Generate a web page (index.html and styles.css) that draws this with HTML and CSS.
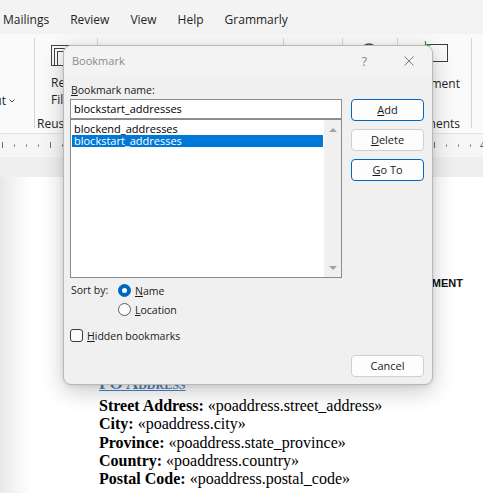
FILE: index.html
```html
<!DOCTYPE html>
<html>
<head>
<meta charset="utf-8">
<link rel="stylesheet" href="styles.css">
</head>
<body>
<div class="app">
  <div class="tabs">
    <span>Mailings</span><span>Review</span><span>View</span><span>Help</span><span>Grammarly</span>
  </div>
  <div class="ribbon">
    <div class="group g1"><span class="drop">Layout<svg class="chev" width="6" height="4" viewBox="0 0 6 4"><path d="M0.5 0.5L3 3L5.5 0.5" stroke="#444" stroke-width="1" fill="none"/></svg></span></div>
    <div class="group g2">
      <svg class="ico-reuse" width="24" height="24" viewBox="0 0 24 24"><rect x="0.5" y="1.5" width="20" height="20" fill="none" stroke="#444"/><rect x="3.5" y="4.5" width="14" height="17" fill="#fff" stroke="#444"/><rect x="6.5" y="7.5" width="14" height="14" fill="none" stroke="#444"/></svg>
      <div class="btnlabel">Reuse<br>Files</div>
      <div class="glabel">Reuse Files</div>
    </div>
    <div class="group g3"></div>
    <div class="group g4"></div>
    <div class="group g5">
      <svg class="ico-ring" width="20" height="20" viewBox="0 0 20 20"><circle cx="10" cy="10" r="8" fill="none" stroke="#444" stroke-width="1.4"/></svg>
    </div>
    <div class="group g6">
      <svg class="ico-comment" width="26" height="24" viewBox="0 0 26 24"><rect x="3.5" y="4.5" width="20" height="17" fill="none" stroke="#3b3b3b"/><path d="M1.5 1v8M1.5 5h5" stroke="#2e9a3b" stroke-width="1.3" fill="none"/></svg>
      <div class="btnlabel right">Comment</div>
      <div class="glabel right">Comments</div>
    </div>
    <div class="group g7"></div>
  </div>
  <div class="ruler">
    <svg width="483" height="23" viewBox="0 0 483 23">
      <g stroke="#6d6d6d" stroke-width="1">
        <line x1="2.5" y1="8" x2="2.5" y2="14"/>
        <line x1="14.5" y1="10.5" x2="14.5" y2="12.5"/>
        <line x1="26.5" y1="10.5" x2="26.5" y2="12.5"/>
        <line x1="38.5" y1="10.5" x2="38.5" y2="12.5"/>
        <line x1="50.5" y1="8" x2="50.5" y2="14"/>
        <line x1="62.5" y1="10.5" x2="62.5" y2="12.5"/>
        <line x1="434.5" y1="8" x2="434.5" y2="14"/>
        <line x1="446.5" y1="10.5" x2="446.5" y2="12.5"/>
        <line x1="458.5" y1="10.5" x2="458.5" y2="12.5"/>
        <line x1="470.5" y1="10.5" x2="470.5" y2="12.5"/>
      </g>
      <text x="480" y="15" font-family="Open Sans" font-size="10" fill="#555">4</text>
    </svg>
  </div>
  <div class="band"></div>
  <div class="doc">
    <p class="agreement">PURCHASE AGREEMENT</p>
    <h2 class="po">PO Address</h2>
    <p class="field"><b>Street Address:</b> «poaddress.street_address»</p>
    <p class="field"><b>City:</b> «poaddress.city»</p>
    <p class="field"><b>Province:</b> «poaddress.state_province»</p>
    <p class="field"><b>Country:</b> «poaddress.country»</p>
    <p class="field"><b>Postal Code:</b> «poaddress.postal_code»</p>
  </div>
</div>

<div class="dialog">
  <div class="titlebar">
    <span class="title">Bookmark</span>
    <span class="help">?</span>
    <svg class="close" width="10" height="10" viewBox="0 0 10 10"><path d="M0.5 0.5L9.5 9.5M9.5 0.5L0.5 9.5" stroke="#7a7a7a" stroke-width="1" fill="none"/></svg>
  </div>
  <div class="dbody">
    <div class="namelabel"><u>B</u>ookmark name:</div>
    <div class="leftcol">
      <div class="input">blockstart_addresses</div>
      <div class="list">
        <div class="items">
          <div class="item">blockend_addresses</div>
          <div class="item sel">blockstart_addresses</div>
        </div>
        <div class="scroll"><span class="tri up"></span><span class="tri down"></span></div>
      </div>
      <div class="sort">
        <span class="sortlabel">Sort by:</span>
        <div class="radios">
          <div class="opt"><span class="radio on"></span><span><u>N</u>ame</span></div>
          <div class="opt"><span class="radio"></span><span><u>L</u>ocation</span></div>
        </div>
      </div>
      <div class="opt check-row"><span class="check"></span><span><u>H</u>idden bookmarks</span></div>
    </div>
    <div class="rightcol">
      <div class="btn primary"><u>A</u>dd</div>
      <div class="btn"><u>D</u>elete</div>
      <div class="btn primary"><u>G</u>o To</div>
      <div class="btn cancel">Cancel</div>
    </div>
  </div>
</div>
</body>
</html>
```

FILE: styles.css
```css
* { box-sizing: border-box; }

body {
  margin: 0;
  width: 483px;
  height: 493px;
  overflow: hidden;
  position: relative;
  background: #fff;
  font-family: "Open Sans", "Noto Sans", sans-serif;
  color: #1a1a1a;
}

.app {
  display: flex;
  flex-direction: column;
  height: 493px;
}

.tabs {
  height: 34px;
  flex: none;
  background: #f3f3f3;
  display: flex;
  align-items: center;
  padding: 5px 0 0 3px;
  gap: 21px;
  font-size: 12px;
  color: #242424;
}

.ribbon {
  height: 100px;
  flex: none;
  background: #fafafa;
  border-bottom: 1px solid #e3e3e3;
  display: flex;
  padding-top: 4px;
}

.group {
  height: 90px;
  border-right: 1px solid #d6d6d6;
  font-size: 12px;
  color: #242424;
  display: flex;
  flex-direction: column;
  flex: none;
  overflow: visible;
}

.g1 { width: 35px; overflow: hidden; align-items: flex-end; padding: 56px 19px 0 0; }
.g1 .drop { white-space: nowrap; line-height: 14px; display: flex; align-items: center; }
.g1 .chev { margin-left: 3px; display: block; }
.g2 { width: 63px; padding-left: 16px; }
.g3 { width: 186px; }
.g4 { width: 59px; }
.g5 { width: 55px; padding: 4px 0 0 16px; }
.g6 { width: 74px; align-items: flex-end; padding-right: 11px; }
.g7 { flex: 1; border-right: none; }

.ico-reuse { margin-top: 6px; display: block; }
.ico-ring { display: block; }
.ico-comment { margin: 2px 10px 0 0; display: block; }

.btnlabel { line-height: 17px; margin-top: 6px; white-space: nowrap; }
.btnlabel.right { margin-top: 11px; text-align: right; }
.glabel { margin-top: auto; margin-bottom: -3px; line-height: 14px; white-space: nowrap; margin-left: -14px; }
.glabel.right { margin-left: 0; }

.ruler {
  height: 23px;
  flex: none;
  background: #f6f6f6;
}
.ruler svg { display: block; }

.band {
  height: 20px;
  flex: none;
  background: #efefef;
}

.doc {
  flex: 1;
  background: linear-gradient(to right, #e8e8e8 0, #f4f4f4 14px, #ffffff 32px);
  padding: 99px 20px 0 99px;
}

.agreement {
  margin: 0;
  font: bold 11px/14px "Liberation Sans", Arial, sans-serif;
  text-align: right;
  color: #111;
}

.po {
  margin: 84px 0 3px;
  font: bold 17px/20px "Liberation Serif", "Times New Roman", serif;
  font-variant: small-caps;
  color: #4f81bd;
  text-decoration: underline;
}

.field {
  margin: 0;
  font: 16px/18.25px "Liberation Serif", "Times New Roman", serif;
  color: #000;
  white-space: nowrap;
}

/* Dialog */
.dialog {
  position: absolute;
  left: 63px;
  top: 45px;
  width: 370px;
  height: 340px;
  background: #f0f0f0;
  border: 1px solid #b8b8b8;
  border-radius: 8px;
  box-shadow: 0 6px 22px rgba(0, 0, 0, 0.22), 0 1px 4px rgba(0, 0, 0, 0.08);
  overflow: hidden;
  color: #1a1a1a;
}

.titlebar {
  height: 29px;
  background: #f3f3f3;
  display: flex;
  align-items: center;
  padding-left: 8px;
}
.title { flex: 1; font-size: 11px; color: #8a8a8a; }
.help { font-size: 13px; color: #8a8a8a; margin-right: 37px; }
.close { margin-right: 18px; display: block; }

.dbody {
  display: grid;
  grid-template-columns: 272px 73px;
  grid-template-rows: 16px 1fr;
  column-gap: 9px;
  padding: 8px 8px 7px 6px;
  height: 309px;
}

.namelabel {
  grid-column: 1 / span 2;
  font-size: 10.5px;
  line-height: 14px;
  padding-left: 1px;
}

.leftcol { display: flex; flex-direction: column; }

.input {
  height: 20px;
  border: 1px solid #8f8f8f;
  background: #fff;
  font-size: 11px;
  line-height: 18px;
  padding-left: 3px;
  color: #000;
}

.list {
  height: 159px;
  border: 1px solid #8a8a8a;
  background: #fff;
  display: flex;
}
.items { flex: 1; padding: 3px 1px 0 1px; }
.item { font-size: 11px; line-height: 12px; padding-left: 2px; color: #000; white-space: nowrap; }
.item.sel { background: #0078d7; color: #fff; }

.scroll {
  width: 17px;
  background: #f0f0f0;
  display: flex;
  flex-direction: column;
  justify-content: space-between;
  align-items: center;
  padding: 8px 0 7px;
}
.tri { width: 0; height: 0; border-left: 4px solid transparent; border-right: 4px solid transparent; }
.tri.up { border-bottom: 4px solid #a3a3a3; }
.tri.down { border-top: 4px solid #a3a3a3; }

.sort { display: flex; margin-top: 3px; font-size: 10.5px; }
.sortlabel { width: 48px; padding-left: 1px; line-height: 19px; }
.radios { display: flex; flex-direction: column; }
.opt { display: flex; align-items: center; gap: 4px; height: 19px; font-size: 10.5px; }

.radio {
  width: 13px;
  height: 13px;
  border-radius: 50%;
  border: 1px solid #5c5c5c;
  background: #fbfbfb;
  display: flex;
  align-items: center;
  justify-content: center;
}
.radio.on { background: #0067c0; border-color: #0067c0; }
.radio.on::after { content: ""; width: 5px; height: 5px; border-radius: 50%; background: #fff; }

.check-row { margin-top: 10px; height: 13px; }
.check {
  width: 13px;
  height: 13px;
  border: 1px solid #3c3c3c;
  border-radius: 3px;
  background: #fbfbfb;
}

.rightcol { display: flex; flex-direction: column; gap: 8px; }

.btn {
  height: 22px;
  border: 1px solid #d0d0d0;
  border-radius: 4px;
  background: #fdfdfd;
  font-size: 11px;
  line-height: 20px;
  text-align: center;
  color: #1a1a1a;
}
.btn.primary { border-color: #0067c0; }
.btn.cancel { margin-top: auto; }
```
